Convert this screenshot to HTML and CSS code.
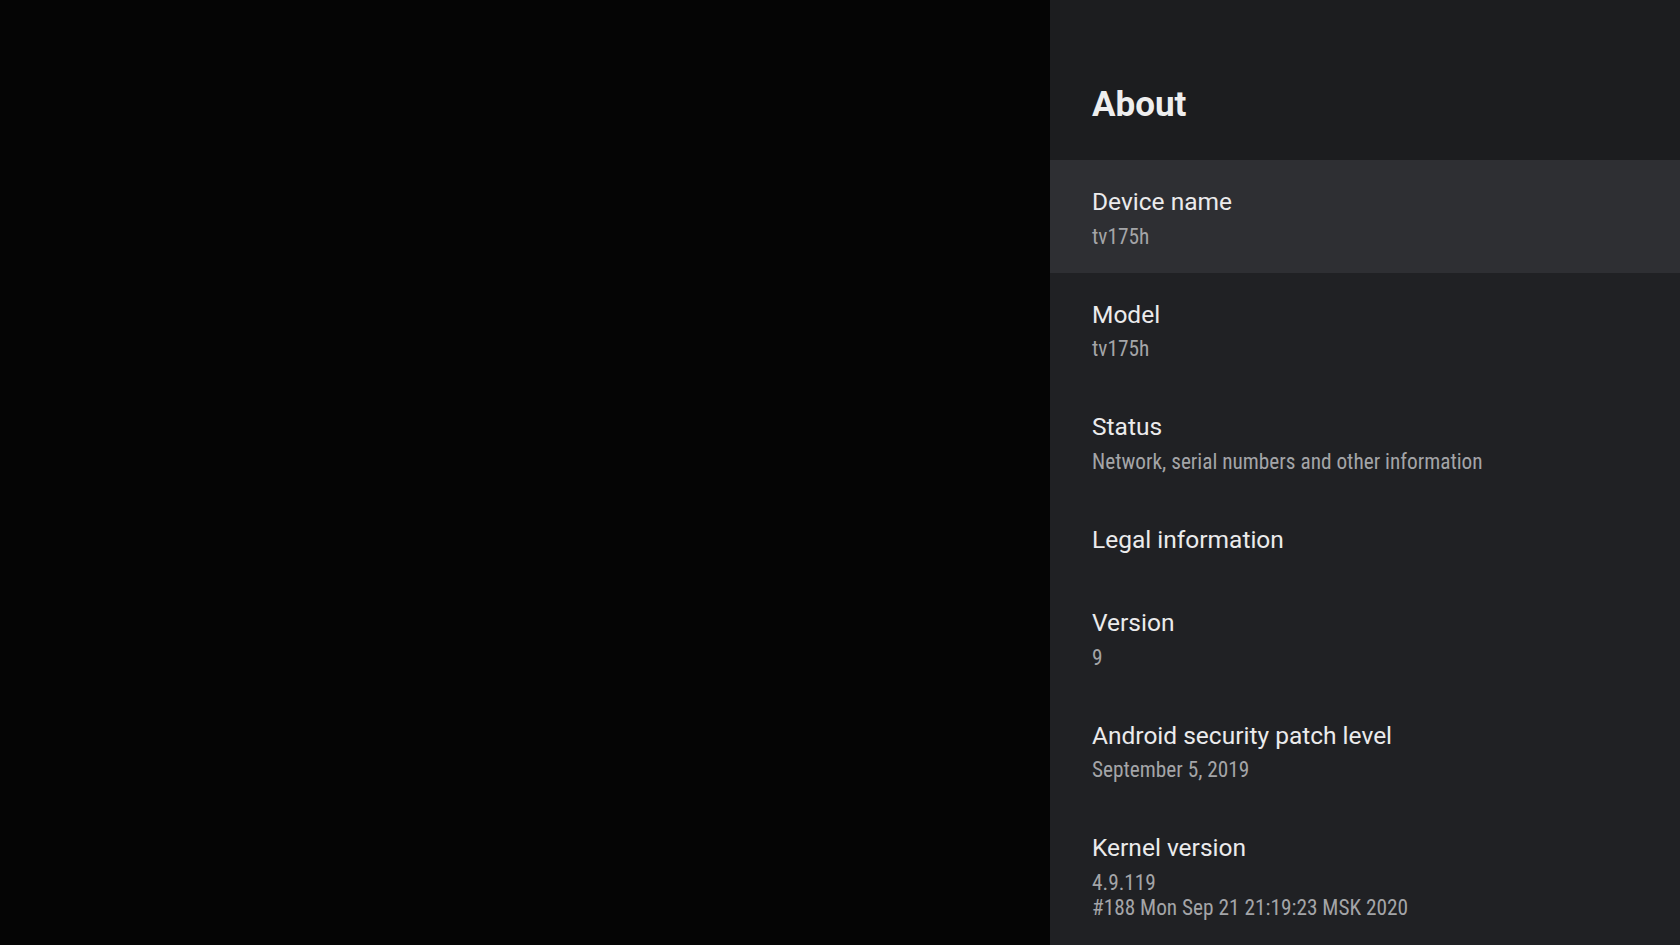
FILE: index.html
```html
<!DOCTYPE html>
<html lang="en">
<head>
    <meta charset="UTF-8">
    <meta name="viewport" content="width=device-width, initial-scale=1.0">
    <title>About</title>
    <link rel="stylesheet" href="styles.css">
</head>
<body>
    <div class="screen">
        <div class="backdrop"></div>

        <div class="panel">
            <div class="panel-header">
                <h1>About</h1>
            </div>

            <ul class="pref-list">
                <li class="pref selected">
                    <div class="pref-title">Device name</div>
                    <div class="pref-summary">tv175h</div>
                </li>
                <li class="pref">
                    <div class="pref-title">Model</div>
                    <div class="pref-summary">tv175h</div>
                </li>
                <li class="pref">
                    <div class="pref-title">Status</div>
                    <div class="pref-summary">Network, serial numbers and other information</div>
                </li>
                <li class="pref">
                    <div class="pref-title">Legal information</div>
                </li>
                <li class="pref">
                    <div class="pref-title">Version</div>
                    <div class="pref-summary">9</div>
                </li>
                <li class="pref">
                    <div class="pref-title">Android security patch level</div>
                    <div class="pref-summary">September 5, 2019</div>
                </li>
                <li class="pref">
                    <div class="pref-title">Kernel version</div>
                    <div class="pref-summary">4.9.119<br>#188 Mon Sep 21 21:19:23 MSK 2020</div>
                </li>
            </ul>
        </div>
    </div>
</body>
</html>
```

FILE: styles.css
```css
html, body {
    margin: 0;
    padding: 0;
    height: 100%;
    overflow: hidden;
}
body {
    font-family: Roboto, "Noto Sans", sans-serif;
    background-color: #050505;
    color: #e9e9ea;
}
.screen {
    display: flex;
    height: 100%;
}
.backdrop {
    flex: 1;
    background-color: #050505;
}
.panel {
    width: 630px;
    background-color: #202124;
    display: flex;
    flex-direction: column;
}
.panel-header {
    height: 160px;
    background-color: #1c1d1f;
    padding: 0 42px;
    box-sizing: border-box;
}
.panel-header h1 {
    margin: 0;
    padding-top: 85px;
    font-size: 35px;
    line-height: 40px;
    font-weight: 700;
    color: #eeeeee;
}
.pref-list {
    list-style: none;
    margin: 0;
    padding: 0;
}
.pref {
    padding: 24px 42px 23.5px;
}
.pref.selected {
    background-color: #2e2f33;
}
.pref-title {
    font-size: 24.5px;
    line-height: 36px;
    color: #ebebec;
}
.pref-summary {
    margin-top: 3.5px;
    font-family: "Roboto Condensed", Roboto, sans-serif;
    font-stretch: condensed;
    font-size: 21.3px;
    line-height: 25.5px;
    color: #a4a5a8;
}
```
